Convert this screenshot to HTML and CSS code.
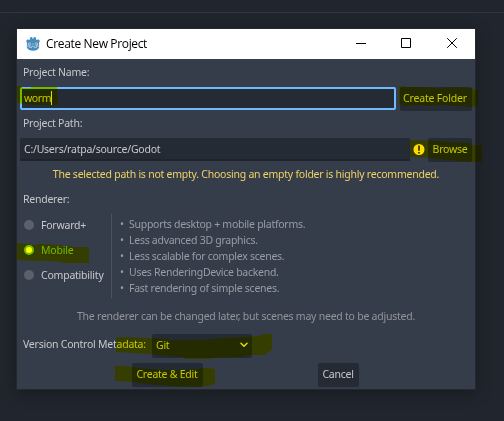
FILE: index.html
```html
<!DOCTYPE html>
<html lang="en">
<head>
<meta charset="utf-8">
<title>Create New Project</title>
<link rel="stylesheet" href="styles.css">
</head>
<body>
<div class="topline"></div>
<main class="dialog">
  <header class="titlebar">
    <svg class="logo" width="16" height="16" viewBox="0 0 16 16">
      <path fill="#478cbf" d="M1 5 2.7 3.2 4 4 5 3.6 4.9 1.6 7 1 7.7 2.8H8.3L9 1 11.1 1.6 11 3.6 12 4 13.300 3.200 15 5 14.100 6.300V11.500Q12.500 14.700 8 14.700T1.900 11.500V6.300Z"/>
      <path fill="none" stroke="#b9d4e7" stroke-width=".8" d="M1.800 10H4.400V11.500H6.500V10.400H9.500V11.500H11.600V10H14.200M8 7.300V9"/>
      <circle cx="4.700" cy="8" r="1.500" fill="#e8f2f8"/><circle cx="11.300" cy="8" r="1.500" fill="#e8f2f8"/>
      <circle cx="4.900" cy="8" r=".8" fill="#414042"/><circle cx="11.100" cy="8" r=".8" fill="#414042"/>
    </svg>
    <h1>Create New Project</h1>
    <svg class="controls" width="138" height="30" viewBox="0 0 138 30" fill="none" stroke="#000">
      <path d="M19 14.500H29M64.500 9.500H73.500V18.500H64.500Z"/><path d="M110.200 9.200 119.800 18.800M119.800 9.200 110.200 18.800"/>
    </svg>
  </header>
  <section class="body">
    <div class="label">Project Name:</div>
    <div class="row">
      <div class="field focused">worm<i class="caret"></i></div>
      <button class="btn create-folder">Create Folder</button>
    </div>
    <div class="label path-label">Project Path:</div>
    <div class="row">
      <div class="field path">C:/Users/ratpa/source/Godot</div>
      <svg class="warn" width="18" height="24" viewBox="0 0 18 24"><circle cx="9" cy="11.500" r="5.500" fill="#ffdd65"/><path stroke="#363d4a" stroke-width="1.800" d="M9 7.500V12.800M9 14V15.500"/></svg>
      <button class="btn browse">Browse</button>
    </div>
    <p class="warning">The selected path is not empty. Choosing an empty folder is highly recommended.</p>
    <div class="label renderer-label">Renderer:</div>
    <div class="renderer">
      <div class="options">
        <div class="option"><i class="radio"></i><span>Forward+</span></div>
        <div class="option on"><i class="radio"></i><span>Mobile</span></div>
        <div class="option"><i class="radio"></i><span>Compatibility</span></div>
      </div>
      <ul class="details">
        <li>Supports desktop + mobile platforms.</li>
        <li>Less advanced 3D graphics.</li>
        <li>Less scalable for complex scenes.</li>
        <li>Uses RenderingDevice backend.</li>
        <li>Fast rendering of simple scenes.</li>
      </ul>
    </div>
    <p class="note">The renderer can be changed later, but scenes may need to be adjusted.</p>
    <div class="vcs">
      <span class="vcs-label">Version Control Metadata:</span>
      <div class="select"><span>Git</span><svg width="8" height="6" viewBox="0 0 8 6" fill="none" stroke="#e0e0e0" stroke-width="1.500" stroke-linecap="round" stroke-linejoin="round"><path d="M1 1.200 4 4.200 7 1.200"/></svg></div>
    </div>
    <div class="actions">
      <button class="btn create">Create &amp; Edit</button>
      <button class="btn cancel">Cancel</button>
    </div>
  </section>
</main>
<svg class="marker" width="504" height="421" viewBox="0 0 504 421" fill="#ff0">
  <path d="M17 86H22V88H31V87H57V95H58V105H31L25 104 17 103Z"/>
  <path d="M399 86H405V87H427L437 88 455 87 473 88V90H478V106L471 107 455 106 443 105 430 106 420 105 405 106 399 104Z"/>
  <path d="M410 140H417L435 141 453 142 471 143V145H482V162H472L457 161 444 160 431 158 410 157Z"/>
  <path d="M17 243 37 245V244H48L57 245 67 246 74 247H89V263H62V262L52 261H37L17 260Z"/>
  <path d="M116 337 152 338 175 340 202 340 222 338 242 337 258 336 264 334H272V350L264 355 252 355 242 357 212 358V359H184V357L165 356 152 354 116 352Z"/>
  <path d="M115 366H123L132 367 151 369 174 370 200 369V368L210 368 215 369V384L209 386 195 387 172 386 145 384 132 382 115 381Z"/>
</svg>
</body>
</html>
```
FILE: styles.css
```css
* { box-sizing: border-box; }
body {
  margin: 0;
  width: 504px;
  height: 421px;
  overflow: hidden;
  position: relative;
  background: #21262e;
  color: #c6c8cc;
  font: 10.5px/16px "Noto Sans", sans-serif;
  letter-spacing: -.24px;
}
.topline { height: 13px; border-bottom: 1px solid #30353c; }
.dialog {
  width: 458px;
  height: 360px;
  margin: 16px 0 0 17px;
  background: #363d4a;
  box-shadow: 0 0 0 1px #25282d, 0 3px 14px 2px rgba(0, 0, 0, .3);
}
.titlebar { display: flex; align-items: center; height: 30px; padding-left: 8px; background: #fff; color: #000; }
.titlebar h1 { flex: 1; margin: 0 0 0 5px; font: 12px/30px "Open Sans", sans-serif; letter-spacing: -.35px; white-space: nowrap; }
.logo, .controls { display: block; flex: none; }
.body { padding: 5px 3px 0; }
.label { padding-left: 3px; height: 16px; }
.row { display: flex; height: 24px; margin-top: 7px; }
.field { height: 23px; display: flex; align-items: center; padding-left: 4px; background: #252b34; border-radius: 2px; }
.focused { width: 376px; padding: 0 0 1px 2px; border: 2px solid #70baff; letter-spacing: -.4px; }
.caret { width: 1px; height: 14px; background: #e0e0e0; }
.path { width: 390px; border-bottom: 2px solid #1e2429; border-radius: 2px 0 0 0; }
.btn { display: block; height: 24px; padding: 0 0 2px; border: 0; border-radius: 2px; background: #252b34; color: inherit; font: inherit; letter-spacing: inherit; text-align: center; white-space: nowrap; }
.create-folder { width: 72px; margin-left: 4px; padding-right: 2px; letter-spacing: -.18px; }
.path-label { margin-top: 4px; }
.warn { flex: none; }
.browse { width: 44px; }
p { margin: 0; text-align: center; white-space: nowrap; }
.warning { margin-top: 4px; color: #f0d264; }
.renderer-label { margin-top: 9px; }
.renderer { display: flex; margin-top: 6px; height: 85px; }
.options { width: 91px; padding-left: 4px; }
.option { display: flex; align-items: center; height: 25px; }
.option span { padding-bottom: 1px; letter-spacing: -.22px; }
.radio { width: 10px; height: 10px; margin: 0 7px 1px 0; border-radius: 50%; background: #5a616c; }
.on { color: #70baff; }
.on .radio { background: #fff; border: 2px solid #70baff; }
.details { list-style: none; margin: 1px 0 0; padding: 2px 0 0 17px; height: 84px; border-left: 1px solid #4d535e; color: #999ca3; letter-spacing: -.27px; }
.details li { position: relative; height: 16px; white-space: nowrap; }
.details li::before { content: "•"; position: absolute; left: -9px; }
.note { margin-top: 10px; color: #91959c; }
.vcs { display: flex; margin-top: 10px; height: 24px; padding-left: 3px; line-height: 21px; }
.vcs-label { width: 129px; white-space: nowrap; }
.select { display: flex; justify-content: space-between; align-items: center; width: 100px; padding: 0 4px 2px; background: #252b34; border-radius: 2px; }
.actions { display: flex; margin-top: 5px; padding-left: 112px; }
.create { width: 71px; padding-right: 1px; }
.cancel { width: 41px; margin-left: 115px; padding-right: 1px; }
.marker { position: absolute; inset: 0; mix-blend-mode: multiply; pointer-events: none; }
```
